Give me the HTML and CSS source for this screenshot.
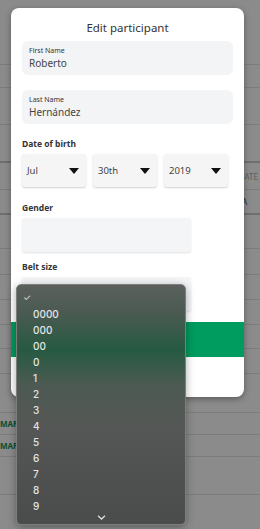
FILE: index.html
```html
<html lang="en-US">
<head>
  <meta charset="UTF-8">
  <meta name="viewport" content="width=device-width">
  <title>Edit participant</title>
  <link rel="stylesheet" href="styles.css">
</head>
<body>

<div class="table">
  <div class="row" style="height:65px"></div>
  <div class="row" style="height:23px"></div>
  <div class="row" style="height:37px"></div>
  <div class="row thick" style="height:38px"></div>
  <div class="row" style="height:27px"><span class="cell">DATE</span></div>
  <div class="row thick" style="height:25px"><span class="cell dark">A</span></div>
  <div class="row" style="height:34px"></div>
  <div class="row" style="height:26px"></div>
  <div class="row" style="height:25px"></div>
  <div class="row" style="height:25px"></div>
  <div class="row" style="height:24px"></div>
  <div class="row" style="height:25px"></div>
  <div class="row" style="height:39px"></div>
  <div class="row" style="height:22px"><span class="mar">MARK</span></div>
  <div class="row" style="height:22px"><span class="mar">MARK</span></div>
  <div class="row" style="height:38px"></div>
</div>

<div class="modal">
  <h3 class="title">Edit participant</h3>
  <div class="field">
    <label>First Name</label>
    <div class="val">Roberto</div>
  </div>
  <div class="field">
    <label>Last Name</label>
    <div class="val">Hernández</div>
  </div>
  <p class="lbl">Date of birth</p>
  <div class="dob">
    <div class="sel">Jul<svg width="10" height="6" viewBox="0 0 10 6"><path d="M0 0h10L5 6z"/></svg></div>
    <div class="sel">30th<svg width="10" height="6" viewBox="0 0 10 6"><path d="M0 0h10L5 6z"/></svg></div>
    <div class="sel">2019<svg width="10" height="6" viewBox="0 0 10 6"><path d="M0 0h10L5 6z"/></svg></div>
  </div>
  <p class="lbl">Gender</p>
  <div class="box gender"></div>
  <p class="lbl">Belt size</p>
  <div class="box belt"></div>
  <div class="save"></div>
  <div class="foot"></div>
</div>

<div class="menu">
  <div class="check">✓</div>
  <div class="opt">0000</div>
  <div class="opt">000</div>
  <div class="opt">00</div>
  <div class="opt">0</div>
  <div class="opt">1</div>
  <div class="opt">2</div>
  <div class="opt">3</div>
  <div class="opt">4</div>
  <div class="opt">5</div>
  <div class="opt">6</div>
  <div class="opt">7</div>
  <div class="opt">8</div>
  <div class="opt">9</div>
  <div class="more"><svg width="9" height="5" viewBox="0 0 9 5"><path d="M1 0.8l3.5 3.2 3.5-3.2" fill="none" stroke="#ddd" stroke-width="1.3"/></svg></div>
</div>

</body>
</html>
```

FILE: styles.css
```css
body {
    margin: 0;
    width: 260px;
    height: 529px;
    overflow: hidden;
    background: #8b8b8b;
    font-family: "Noto Sans", "Open Sans", sans-serif;
}
.table {
    display: flex;
    flex-direction: column;
}
.row {
    border-bottom: 1px solid #7c7c7c;
    box-sizing: border-box;
    display: flex;
    align-items: center;
    justify-content: space-between;
}
.row.thick {
    border-bottom: 2px solid #6e6e6e;
}
.cell {
    margin-left: auto;
    margin-right: 2px;
    font-size: 8px;
    color: #5d5d5d;
}
.cell.dark {
    margin-right: 13px;
    color: #2a2a2a;
}
.mar {
    margin-left: 0;
    font-size: 8px;
    font-weight: 700;
    color: #0e4d2c;
}
.modal {
    position: absolute;
    left: 11px;
    top: 8px;
    width: 233px;
    height: 389px;
    background: #fff;
    border-radius: 8px;
    box-shadow: 0 2px 6px rgba(0,0,0,0.35);
    overflow: hidden;
    box-sizing: border-box;
    padding-top: 12px;
}
.title {
    margin: 0 0 5px;
    text-align: center;
    font-size: 11.5px;
    font-weight: 400;
    color: #333;
    line-height: 16px;
}
.field {
    margin: 0 11px 15px;
    height: 34px;
    background: #f3f4f6;
    border-radius: 6px;
    box-sizing: border-box;
    padding: 5px 7px 0;
}
.field label {
    display: block;
    font-size: 7px;
    color: #333;
    line-height: 10px;
}
.val {
    font-size: 10px;
    color: #444;
    line-height: 15px;
}
.lbl {
    margin: 0 11px 5px;
    font-size: 8.5px;
    font-weight: 700;
    color: #333;
    line-height: 11px;
}
.field + .field {
    margin-bottom: 14px;
}
.dob {
    display: flex;
    gap: 7px;
    margin: 0 11px 15px;
}
.sel {
    width: 64px;
    height: 33px;
    background: #f5f5f6;
    border-radius: 3px;
    box-shadow: 0 1px 2px rgba(0,0,0,0.18);
    box-sizing: border-box;
    padding: 0 7px 0 5px;
    display: flex;
    align-items: center;
    justify-content: space-between;
    font-size: 9.5px;
    color: #444;
}
.sel svg {
    fill: #111;
}
.box {
    margin: 0 11px;
    width: 169px;
    height: 34px;
    background: #f4f5f7;
    border-radius: 3px;
    box-shadow: 0 1px 2px rgba(0,0,0,0.12);
}
.gender {
    margin-bottom: 9px;
}
.belt {
    margin-bottom: 11px;
}
.save {
    height: 35px;
    background: #009b5f;
}
.menu {
    position: absolute;
    left: 16px;
    top: 284px;
    width: 170px;
    height: 241px;
    box-sizing: border-box;
    border: 1px solid #7d7f7e;
    border-radius: 5px;
    background: linear-gradient(180deg, #5b605d 0%, #4a5a52 12%, #265a42 27%, #4d5a53 42%, #545755 58%, #4a4c4b 100%);
    box-shadow: 0 2px 8px rgba(0,0,0,0.35);
    padding: 5px 0 0;
    font-family: Inter, Roboto, sans-serif;
    color: #e3e3e3;
}
.check {
    padding-left: 6px;
    font-size: 9px;
    line-height: 16px;
    height: 16px;
}
.opt {
    padding-left: 16px;
    font-size: 10px;
    font-weight: 500;
    line-height: 16px;
}
.more {
    text-align: center;
    line-height: 12px;
    padding-top: 1px;
}
```
